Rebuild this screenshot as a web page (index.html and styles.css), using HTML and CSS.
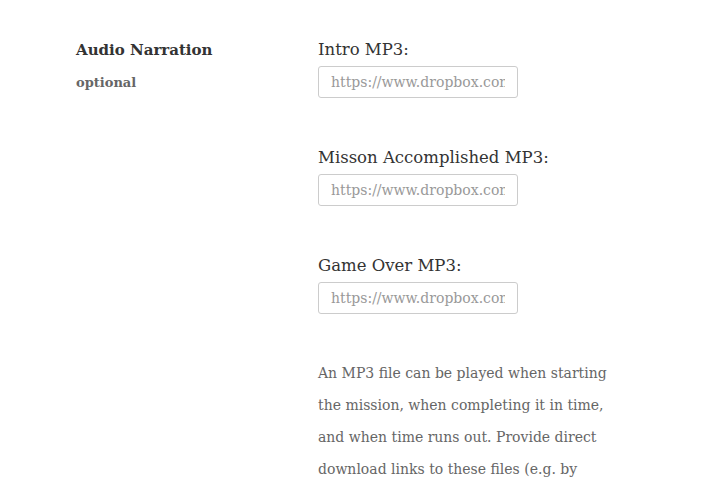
FILE: index.html
```html
<!DOCTYPE html>
<html>
<head>
<meta charset="utf-8" />
<title>Audio Narration</title>
	<link rel="stylesheet" href="styles.css">
</head>
<body>
	<div class="section">
		<div class="section-head">
			<h3 class="section-title">Audio Narration</h3>
			<div class="section-note">optional</div>
		</div>
		<div class="section-body">
			<div class="field">
				<label class="field-label">Intro MP3:</label>
				<input type="text" class="field-input" placeholder="https://www.dropbox.com/" />
			</div>
			<div class="field">
				<label class="field-label">Misson Accomplished MP3:</label>
				<input type="text" class="field-input" placeholder="https://www.dropbox.com/" />
			</div>
			<div class="field">
				<label class="field-label">Game Over MP3:</label>
				<input type="text" class="field-input" placeholder="https://www.dropbox.com/" />
			</div>
			<p class="help">An MP3 file can be played when starting the mission, when completing it in time, and when time runs out. Provide direct download links to these files (e.g. by</p>
		</div>
	</div>
</body>
</html>
```
FILE: styles.css
```css
body {
	margin: 0;
	background: #fff;
	font-family: "DejaVu Serif", "Liberation Serif", serif;
	color: #333;
}
.section {
	display: grid;
	grid-template-columns: 242px 300px;
	padding: 36px 0 0 76px;
}
.section-title {
	margin: 0;
	padding-top: 2px;
	font-size: 15px;
	line-height: 24px;
	font-weight: bold;
	color: #333;
}
.section-note {
	margin-top: 12px;
	font-size: 13px;
	line-height: 18px;
	font-weight: bold;
	color: #666;
}
.field {
	margin-bottom: 46px;
}
.field-label {
	display: block;
	padding-top: 2px;
	font-size: 16.5px;
	line-height: 24px;
	color: #333;
	margin-bottom: 4px;
}
.field-input {
	box-sizing: border-box;
	width: 200px;
	height: 32px;
	padding: 0 12px;
	border: 1px solid #ccc;
	border-radius: 3px;
	font-family: "DejaVu Serif", "Liberation Serif", serif;
	font-size: 14px;
	color: #333;
	outline: none;
}
.field-input::placeholder {
	color: #999;
}
.help {
	margin: -3px 0 0;
	width: 300px;
	font-size: 14px;
	line-height: 32px;
	color: #666;
}
```
